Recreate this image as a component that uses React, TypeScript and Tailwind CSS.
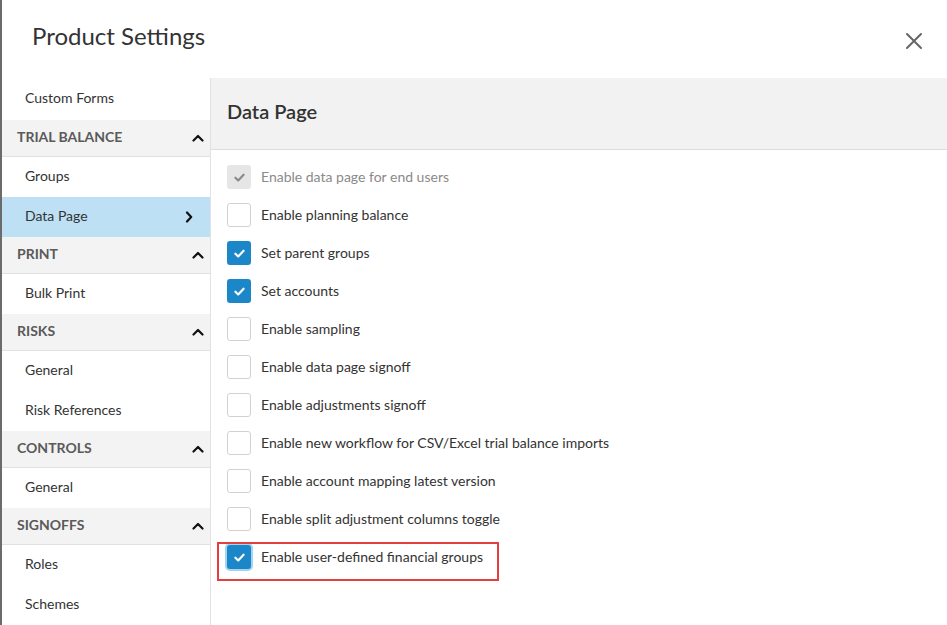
import React from "react";

type Item = { label: string; kind: "item" | "header"; active?: boolean };

const sidebar: Item[] = [
  { label: "Custom Forms", kind: "item" },
  { label: "TRIAL BALANCE", kind: "header" },
  { label: "Groups", kind: "item" },
  { label: "Data Page", kind: "item", active: true },
  { label: "PRINT", kind: "header" },
  { label: "Bulk Print", kind: "item" },
  { label: "RISKS", kind: "header" },
  { label: "General", kind: "item" },
  { label: "Risk References", kind: "item" },
  { label: "CONTROLS", kind: "header" },
  { label: "General", kind: "item" },
  { label: "SIGNOFFS", kind: "header" },
  { label: "Roles", kind: "item" },
  { label: "Schemes", kind: "item" },
];

type State = "disabled" | "off" | "on";
const options: { label: string; state: State; focus?: boolean }[] = [
  { label: "Enable data page for end users", state: "disabled" },
  { label: "Enable planning balance", state: "off" },
  { label: "Set parent groups", state: "on" },
  { label: "Set accounts", state: "on" },
  { label: "Enable sampling", state: "off" },
  { label: "Enable data page signoff", state: "off" },
  { label: "Enable adjustments signoff", state: "off" },
  { label: "Enable new workflow for CSV/Excel trial balance imports", state: "off" },
  { label: "Enable account mapping latest version", state: "off" },
  { label: "Enable split adjustment columns toggle", state: "off" },
  { label: "Enable user-defined financial groups", state: "on", focus: true },
];

function Check({ color }: { color: string }) {
  return (
    <svg width="13" height="13" viewBox="0 0 12 12" fill="none">
      <path d="M2.2 6.2 L4.8 8.7 L9.8 3.4" stroke={color} strokeWidth="2" strokeLinecap="round" strokeLinejoin="round" />
    </svg>
  );
}

function Checkbox({ state, focus }: { state: State; focus?: boolean }) {
  if (state === "disabled")
    return (
      <div className="w-6 h-6 rounded-[3px] bg-[#e6e6e6] flex items-center justify-center shrink-0">
        <Check color="#8a8a8a" />
      </div>
    );
  if (state === "on")
    return (
      <div
        className={
          "w-6 h-6 rounded-[3px] bg-[#1b87c9] flex items-center justify-center shrink-0 " +
          (focus ? "ring-2 ring-[#a6d3ef]" : "")
        }
      >
        <Check color="#ffffff" />
      </div>
    );
  return <div className="w-6 h-6 rounded-[3px] bg-white border border-[#d2d2d2] shrink-0" />;
}

function ChevronUp() {
  return (
    <svg width="12" height="8" viewBox="0 0 12 8" fill="none">
      <path d="M1.5 6.5 L6 2 L10.5 6.5" stroke="#111" strokeWidth="2.2" strokeLinecap="round" strokeLinejoin="round" />
    </svg>
  );
}

function ChevronRight() {
  return (
    <svg width="8" height="12" viewBox="0 0 8 12" fill="none">
      <path d="M2 1.5 L6.2 6 L2 10.5" stroke="#111" strokeWidth="2.2" strokeLinecap="round" strokeLinejoin="round" />
    </svg>
  );
}

export default function App() {
  return (
    <div
      className="w-[947px] h-[625px] bg-white border-l-2 border-[#6b6b6b] flex flex-col overflow-hidden"
      style={{ fontFamily: "Lato, 'Open Sans', sans-serif" }}
    >
      <div className="h-[78px] shrink-0 flex items-start justify-between pl-[30px] pr-[24px]">
        <div className="text-[24px] text-[#333] mt-[21px] leading-[30px]">Product Settings</div>
        <div className="mt-[32px]">
          <svg width="18" height="18" viewBox="0 0 18 18" fill="none">
            <path d="M2 2 L16 16 M16 2 L2 16" stroke="#666" strokeWidth="2" strokeLinecap="round" />
          </svg>
        </div>
      </div>
      <div className="flex flex-1 min-h-0">
        <div className="w-[209px] shrink-0 border-r border-[#e2e2e2] flex flex-col">
          {sidebar.map((it, i) =>
            it.kind === "header" ? (
              <div
                key={i}
                className="h-[37px] shrink-0 bg-[#f3f3f3] border-b border-[#e0e0e0] flex items-center justify-between pl-[15px] pr-[6px]"
              >
                <span className="text-[14px] font-bold text-[#5a5a5a] relative top-[-2px]">{it.label}</span>
                <ChevronUp />
              </div>
            ) : (
              <div
                key={i}
                className={
                  "shrink-0 flex items-center justify-between pl-[23px] pr-[17px] " +
                  (i === 0 ? "h-[42px]" : "h-[40px]") +
                  (it.active ? " bg-[#bde0f5]" : "")
                }
              >
                <span className="text-[14px] text-[#333] relative top-[-2px]">{it.label}</span>
                {it.active && <ChevronRight />}
              </div>
            )
          )}
        </div>
        <div className="flex-1 flex flex-col">
          <div className="h-[72px] shrink-0 bg-[#f2f2f2] border-b border-[#dcdcdc] flex items-center pl-4">
            <span className="text-[20px] font-semibold text-[#333] relative top-[-3px]">Data Page</span>
          </div>
          <div className="pt-[8px] flex flex-col">
            {options.map((o, i) => (
              <div key={i} className="h-[38px] relative flex items-center pl-4 gap-[10px]">
                <Checkbox state={o.state} focus={o.focus} />
                <span
                  className={
                    "text-[14px] relative top-[-1px] " + (o.state === "disabled" ? "text-[#8a8a8a]" : "text-[#333]")
                  }
                >
                  {o.label}
                </span>
                {o.focus && (
                  <div className="absolute left-[6px] top-[4px] w-[282px] h-[39px] border-2 border-[#e53e3e] pointer-events-none" />
                )}
              </div>
            ))}
          </div>
        </div>
      </div>
    </div>
  );
}
